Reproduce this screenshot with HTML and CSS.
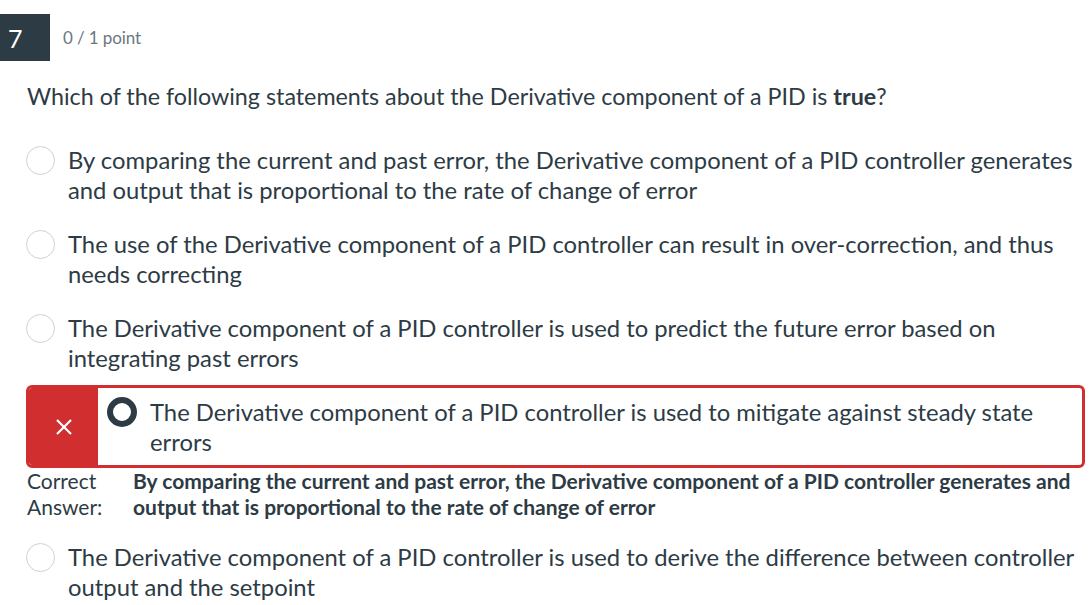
FILE: index.html
```html
<!DOCTYPE html>
<html>
<head>
<meta charset="utf-8">
<link rel="stylesheet" href="styles.css">
</head>
<body>
<div class="question">
  <div class="header">
    <div class="qnum">7</div>
    <div class="points">0 / 1 point</div>
  </div>
  <div class="prompt">Which of the following statements about the Derivative component of a PID is <strong>true</strong>?</div>
  <div class="answers">
    <div class="option">
      <span class="radio"></span>
      <span class="label">By comparing the current and past error, the Derivative component of a PID controller generates and output that is proportional to the rate of change of error</span>
    </div>
    <div class="option">
      <span class="radio"></span>
      <span class="label">The use of the Derivative component of a PID controller can result in over-correction, and thus needs correcting</span>
    </div>
    <div class="option">
      <span class="radio"></span>
      <span class="label">The Derivative component of a PID controller is used to predict the future error based on integrating past errors</span>
    </div>
    <div class="wrong">
      <div class="wrong-flag">
        <svg width="18" height="18" viewBox="0 0 18 18"><path d="M2 2 L16 16 M16 2 L2 16" stroke="#fff" stroke-width="2.2" fill="none"/></svg>
      </div>
      <div class="wrong-body">
        <span class="radio checked"></span>
        <span class="label">The Derivative component of a PID controller is used to mitigate against steady state errors</span>
      </div>
    </div>
    <div class="correct">
      <div class="correct-label">Correct<br>Answer:</div>
      <div class="correct-text">By comparing the current and past error, the Derivative component of a PID controller generates and output that is proportional to the rate of change of error</div>
    </div>
    <div class="option last">
      <span class="radio"></span>
      <span class="label">The Derivative component of a PID controller is used to derive the difference between controller output and the setpoint</span>
    </div>
  </div>
</div>
</body>
</html>
```

FILE: styles.css
```css
html, body {
  margin: 0;
  padding: 0;
  background: #fff;
}
body {
  font-family: Lato, "Liberation Sans", sans-serif;
  color: #2d3b45;
}
.question {
  padding-top: 14px;
}
.header {
  display: flex;
  align-items: center;
  height: 47px;
}
.qnum {
  width: 50px;
  height: 47px;
  background: #2d3b45;
  color: #fff;
  font-size: 25px;
  display: flex;
  align-items: center;
  padding-left: 8px;
  box-sizing: border-box;
}
.points {
  margin-left: 13px;
  font-size: 17px;
  color: #6b7780;
  letter-spacing: -0.1px;
}
.prompt {
  margin: 20px 0 0 27px;
  font-size: 23.3px;
  line-height: 30px;
}
.prompt strong {
  font-weight: 700;
}
.answers {
  margin-top: 34px;
  padding-left: 26px;
  padding-right: 6px;
}
.option {
  display: flex;
  align-items: flex-start;
  margin-bottom: 24px;
}
.radio {
  flex: none;
  width: 29px;
  height: 29px;
  border: 1px solid #cdd2d6;
  border-radius: 50%;
  box-sizing: border-box;
  margin-top: 1px;
  margin-right: 13px;
  background: #fff;
}
.radio.checked {
  width: 30px;
  height: 30px;
  border: 6px solid #2d3b45;
  margin-top: 0;
  margin-right: 13px;
}
.label {
  font-size: 23.8px;
  line-height: 30px;
}
.wrong {
  display: flex;
  border: 3px solid #d12f2f;
  border-radius: 6px;
  overflow: hidden;
  margin-top: -12px;
}
.wrong-flag {
  width: 69px;
  flex: none;
  background: #d12f2f;
  display: flex;
  align-items: center;
  justify-content: center;
}
.wrong-body {
  display: flex;
  align-items: flex-start;
  padding: 9px 8px 8px 9px;
}
.correct {
  display: flex;
  margin-top: 0;
  margin-bottom: 22px;
  line-height: 26px;
  font-size: 21px;
}
.correct-label {
  width: 106px;
  flex: none;
  padding-left: 1px;
}
.correct-text {
  font-weight: 700;
}
```
